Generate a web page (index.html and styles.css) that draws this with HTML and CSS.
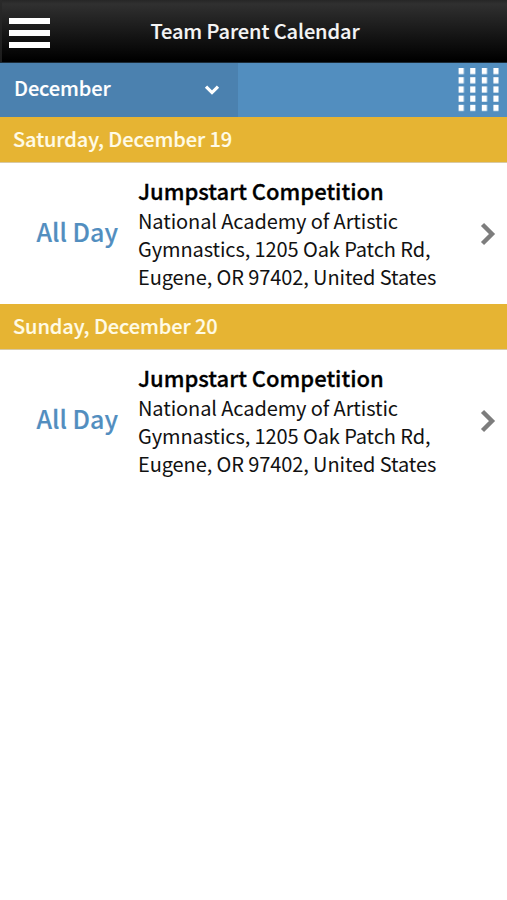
FILE: index.html
```html
<!DOCTYPE html>
<html lang="en">
<head>
<meta charset="utf-8">
<title>Team Parent Calendar</title>
<link rel="stylesheet" href="styles.css">
</head>
<body>
<header class="topbar">
  <button class="menu" aria-label="Menu"><span class="bar"></span><span class="bar"></span><span class="bar"></span></button>
  <h1 class="title">Team Parent Calendar</h1>
</header>
<nav class="filter">
  <button class="month"><span>December</span>
    <svg class="caret" width="16" height="12" viewBox="0 0 16 12"><path d="M2 2.6L8 8.6L14 2.6" fill="none" stroke="#fff" stroke-width="3.2"/></svg>
  </button>
  <svg class="dots" width="41" height="44" viewBox="0 0 41 44"><defs><pattern id="dots" x=".6" width="11.6" height="9.2" patternUnits="userSpaceOnUse"><rect width="5.2" height="6.2" fill="#fff"/></pattern></defs><rect width="41" height="44" fill="url(#dots)"/></svg>
</nav>
<main>
  <section>
    <h2 class="date">Saturday, December 19</h2>
    <article class="event">
      <div class="time">All Day</div>
      <div class="details">
        <h3 class="name">Jumpstart Competition</h3>
        <p class="place">National Academy of Artistic<br>Gymnastics, 1205 Oak Patch Rd,<br>Eugene, OR 97402, United States</p>
      </div>
      <svg class="arrow" width="16" height="24" viewBox="0 0 16 24"><path d="M2.5 2.5L12 12L2.5 21.5" fill="none" stroke="#7d7d7d" stroke-width="4.4"/></svg>
    </article>
  </section>
  <section>
    <h2 class="date">Sunday, December 20</h2>
    <article class="event">
      <div class="time">All Day</div>
      <div class="details">
        <h3 class="name">Jumpstart Competition</h3>
        <p class="place">National Academy of Artistic<br>Gymnastics, 1205 Oak Patch Rd,<br>Eugene, OR 97402, United States</p>
      </div>
      <svg class="arrow" width="16" height="24" viewBox="0 0 16 24"><path d="M2.5 2.5L12 12L2.5 21.5" fill="none" stroke="#7d7d7d" stroke-width="4.4"/></svg>
    </article>
  </section>
</main>
</body>
</html>
```

FILE: styles.css
```css
* { box-sizing: border-box; }
body { margin: 0; background: #fff; color: #111; font-family: "Noto Sans CJK SC", "Noto Sans", sans-serif; }
h1, h2, h3, p { margin: 0; }
button { border: 0; padding: 0; background: none; font: inherit; color: inherit; }
.title, .month, .date, .time, .name { font-weight: 500; -webkit-text-stroke: .15px currentColor; }
.topbar { display: grid; grid-template-columns: 60px 1fr 60px; align-items: center; height: 63px; background: linear-gradient(#2a2a2a, #1c1c1c) 0 0 / 2px 100% no-repeat, linear-gradient(#262626 0, #303030 4px, #000 60px); border-bottom: 1px solid #1b2a36; }
.menu { display: flex; flex-direction: column; gap: 6px; margin: 3px 0 0 9px; width: 41px; }
.bar { height: 6px; background: #fff; }
.title { color: #f5f5f5; font-size: 20px; letter-spacing: -.08px; line-height: 30px; text-align: center; margin: 0 0 0 3px; white-space: nowrap; }
.filter { display: flex; justify-content: space-between; align-items: center; height: 54px; padding-right: 8px; background: #528ebf; }
.month { display: flex; align-items: center; justify-content: space-between; width: 238px; height: 54px; padding: 0 18px 5px 14px; background: #4b81af; color: #fff; font-size: 20px; letter-spacing: -.1px; }
.caret { margin-top: 5px; }
.date { height: 46px; padding: 0 13px; background: #e6b433; border-bottom: 1px solid #d8c9a4; color: #fffbe6; font-size: 20px; letter-spacing: -.08px; line-height: 44px; }
.event { display: grid; grid-template-columns: 118px 1fr 16px; column-gap: 20px; align-items: center; height: 141px; padding-right: 11px; }
.time { color: #528ebf; font-size: 25px; line-height: 36px; text-align: right; white-space: nowrap; margin-top: -6px; }
.details { white-space: nowrap; margin-top: -1px; }
.name { color: #000; font-size: 22px; line-height: 28px; margin-bottom: 3px; -webkit-text-stroke-width: .3px; }
.place { font-size: 20px; letter-spacing: -.1px; line-height: 28px; }
```
